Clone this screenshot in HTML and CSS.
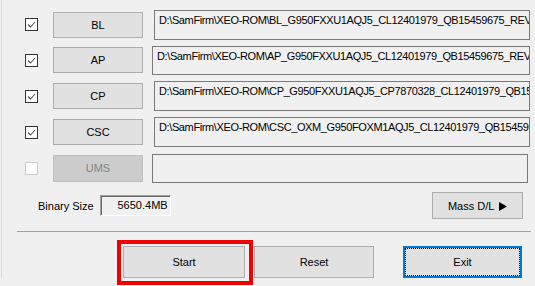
FILE: index.html
```html
<!DOCTYPE html>
<html>
<head>
<meta charset="utf-8">
<link rel="stylesheet" href="styles.css">
</head>
<body>
<div class="panel">
  <div class="rows">
    <div class="row row-a">
      <span class="chk"><svg viewBox="0 0 11 11" width="11" height="11"><path d="M2 5.5 L4.5 8 L9 3" fill="none" stroke="#555" stroke-width="1.1"/></svg></span>
      <button class="btn part">BL</button>
      <div class="path">D:\SamFirm\XEO-ROM\BL_G950FXXU1AQJ5_CL12401979_QB15459675_REV00_user_low_ship.tar.md5</div>
    </div>
    <div class="row row-b">
      <span class="chk"><svg viewBox="0 0 11 11" width="11" height="11"><path d="M2 5.5 L4.5 8 L9 3" fill="none" stroke="#555" stroke-width="1.1"/></svg></span>
      <button class="btn part">AP</button>
      <div class="path path-wide">D:\SamFirm\XEO-ROM\AP_G950FXXU1AQJ5_CL12401979_QB15459675_REV00_user_low_ship_meta.tar.md5</div>
    </div>
    <div class="row row-b">
      <span class="chk"><svg viewBox="0 0 11 11" width="11" height="11"><path d="M2 5.5 L4.5 8 L9 3" fill="none" stroke="#555" stroke-width="1.1"/></svg></span>
      <button class="btn part">CP</button>
      <div class="path">D:\SamFirm\XEO-ROM\CP_G950FXXU1AQJ5_CP7870328_CL12401979_QB15459675_REV00_user_low_ship.tar.md5</div>
    </div>
    <div class="row row-b">
      <span class="chk"><svg viewBox="0 0 11 11" width="11" height="11"><path d="M2 5.5 L4.5 8 L9 3" fill="none" stroke="#555" stroke-width="1.1"/></svg></span>
      <button class="btn part">CSC</button>
      <div class="path">D:\SamFirm\XEO-ROM\CSC_OXM_G950FOXM1AQJ5_CL12401979_QB15459675_REV00_user_low_ship.tar.md5</div>
    </div>
    <div class="row row-b">
      <span class="chk chk-off"></span>
      <button class="btn part btn-disabled">UMS</button>
      <div class="path path-wide path-empty"></div>
    </div>
  </div>

  <div class="info">
    <span class="label">Binary Size</span>
    <div class="size">5650.4MB</div>
    <button class="btn mass">Mass D/L <svg class="tri" viewBox="0 0 8 9" width="8" height="9"><path d="M0 0 L8 4.5 L0 9 Z" fill="#000"/></svg></button>
  </div>

  <div class="sep"></div>

  <div class="actions">
    <div class="mark">
      <button class="btn action start">Start</button>
    </div>
    <button class="btn action reset">Reset</button>
    <button class="btn action exit">Exit</button>
  </div>
</div>
</body>
</html>
```

FILE: styles.css
```css
html, body {
  margin: 0;
  padding: 0;
  background: #f0f0f0;
}
body {
  width: 535px;
  height: 286px;
  overflow: hidden;
  font-family: "Liberation Sans", Arial, sans-serif;
  font-size: 11px;
  color: #000;
}
.panel {
  margin-left: 1px;
  border-left: 1px solid #dadada;
  height: 278px;
}
.rows {
  padding-top: 7px;
  padding-left: 23px;
}
.row {
  display: flex;
  align-items: center;
  height: 36px;
}
.row-a {
  height: 35px;
}
.chk {
  box-sizing: border-box;
  width: 13px;
  height: 13px;
  border: 1px solid #333;
  background: #fff;
  display: flex;
  align-items: center;
  justify-content: center;
  flex: none;
}
.chk svg {
  display: block;
}
.chk-off {
  border-color: #cccccc;
  background: #fff;
}
.btn {
  box-sizing: border-box;
  font-family: "Liberation Sans", Arial, sans-serif;
  font-size: 11px;
  color: #000;
  background: #e1e1e1;
  border: 1px solid #adadad;
  border-radius: 0;
  padding: 0;
  margin: 0;
  flex: none;
}
.part {
  width: 90px;
  height: 26px;
  margin-left: 15px;
}
.btn-disabled {
  background: #cccccc;
  border-color: #bfbfbf;
  color: #838383;
  height: 27px;
}
.path {
  box-sizing: border-box;
  margin-left: 11px;
  width: 376px;
  height: 30px;
  border: 1px solid #7a7a7a;
  background: #f0f0f0;
  padding: 3px 0 0 4px;
  line-height: 13px;
  letter-spacing: -0.38px;
  white-space: nowrap;
  overflow: hidden;
  flex: none;
}
.path-wide {
  margin-left: 9px;
  width: 378px;
  height: 29px;
}
.path-empty {
  width: 376px;
}
.info {
  display: flex;
  align-items: center;
  margin-top: 6px;
  height: 27px;
  padding-left: 36px;
}
.label {
  margin-right: 6px;
}
.size {
  box-sizing: border-box;
  width: 71px;
  height: 21px;
  border-top: 1px solid #a0a0a0;
  border-left: 1px solid #a0a0a0;
  border-right: 1px solid #fff;
  border-bottom: 1px solid #fff;
  box-shadow: inset 1px 1px 0 #696969;
  text-align: right;
  padding-right: 2px;
  line-height: 18px;
}
.mass {
  margin-left: auto;
  margin-right: 12px;
  width: 91px;
  height: 27px;
}
.tri {
  display: inline-block;
  vertical-align: -1px;
  margin-left: 2px;
}
.sep {
  margin: 12px 4px 0 15px;
  height: 1px;
  background: #a0a0a0;
}
.actions {
  display: flex;
  align-items: center;
  margin-top: 14px;
  padding-left: 121px;
}
.action {
  height: 32px;
}
.mark {
  position: relative;
  flex: none;
}
.mark::before {
  content: "";
  position: absolute;
  left: -6px;
  top: -6px;
  right: -8px;
  bottom: -7px;
  border: 4px solid #f00000;
  pointer-events: none;
}
.start {
  display: block;
  width: 122px;
}
.reset {
  width: 120px;
  margin-left: 9px;
}
.exit {
  width: 119px;
  margin-left: 29px;
  border: 2px solid #0078d7;
  outline: 1px dotted #000;
  outline-offset: -3px;
}
```
